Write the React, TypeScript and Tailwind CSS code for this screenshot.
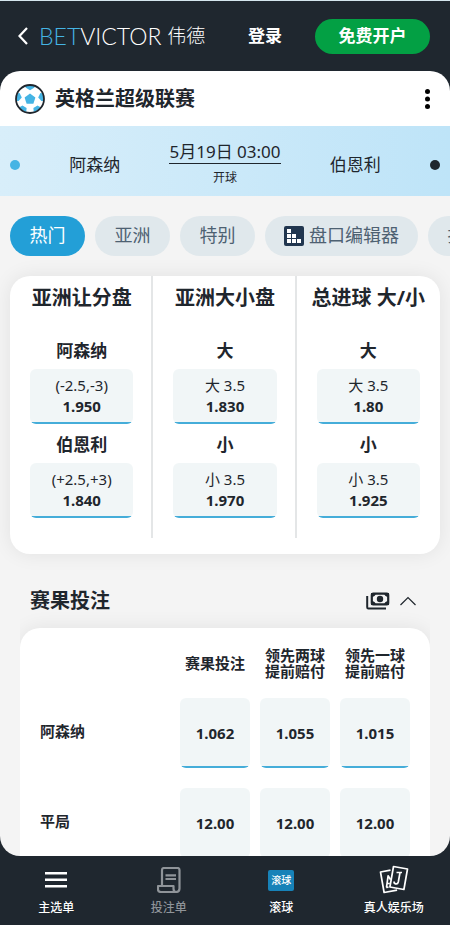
import React from "react";

type Selection = { team: string; line: string; price: string };
type Market = { title: string; selections: Selection[] };

const tabs = ["热门", "亚洲", "特别", "盘口编辑器", "投注"];

const markets: Market[] = [
  {
    title: "亚洲让分盘",
    selections: [
      { team: "阿森纳", line: "(-2.5,-3)", price: "1.950" },
      { team: "伯恩利", line: "(+2.5,+3)", price: "1.840" },
    ],
  },
  {
    title: "亚洲大小盘",
    selections: [
      { team: "大", line: "大 3.5", price: "1.830" },
      { team: "小", line: "小 3.5", price: "1.970" },
    ],
  },
  {
    title: "总进球 大/小",
    selections: [
      { team: "大", line: "大 3.5", price: "1.80" },
      { team: "小", line: "小 3.5", price: "1.925" },
    ],
  },
];

const resultColumns = ["赛果投注", "领先两球提前赔付", "领先一球提前赔付"];

const resultRows = [
  { name: "阿森纳", prices: ["1.062", "1.055", "1.015"] },
  { name: "平局", prices: ["12.00", "12.00", "12.00"] },
];

function BackIcon() {
  return (
    <svg width="10" height="18" viewBox="0 0 10 18" fill="none" stroke="#fff" strokeWidth="2.2">
      <path d="M9 1 1.5 9 9 17" />
    </svg>
  );
}

function FootballIcon() {
  return (
    <svg width="30" height="30" viewBox="0 0 30 30">
      <defs>
        <clipPath id="ball">
          <circle cx="15" cy="15" r="13.6" />
        </clipPath>
      </defs>
      <circle cx="15" cy="15" r="14" fill="#fff" />
      <g clipPath="url(#ball)" fill="#45b4e4">
        <path d="M15 9.6l5.4 3.9-2 6.3h-6.8l-2-6.3z" />
        <path d="M10.5 0h9v3.6L15 6.2l-4.500-2.600z" />
        <path d="M30 9.500l-4.600-.5-2.200 4.600 3.200 3.400H30z" />
        <path d="M0 9.500l4.600-.5 2.200 4.600L3.600 17H0z" />
        <path d="M24.500 28l1.600-4.500-3.600-1.900-4.100 2.300.4 4.600z" />
        <path d="M5.500 28l-1.600-4.500 3.600-1.900 4.100 2.300-.4 4.600z" />
      </g>
      <circle cx="15" cy="15" r="14" fill="none" stroke="#1f262d" strokeWidth="1.8" />
    </svg>
  );
}

function BuilderIcon() {
  return (
    <svg width="20" height="20" viewBox="0 0 20 20">
      <rect width="20" height="20" rx="2" fill="#21364f" />
      <path
        fill="#fff"
        d="M3 3h4v4H3zM3 8h4v4H3zM8 8h4v4H8zM3 13h4v4H3zM8 13h4v4H8zM13 13h4v4h-4z"
      />
    </svg>
  );
}

function CashIcon() {
  return (
    <svg width="24" height="18" viewBox="0 0 24 18" fill="none" stroke="#1f262d">
      <path d="M1.200 4v11.200q0 1.200 1.200 1.200H20" strokeWidth="2" />
      <rect x="5.800" y="1.700" width="16.400" height="10.600" rx="1.400" strokeWidth="2.200" />
      <path
        d="M5 1h5Q9.500 4.500 6 5H5zM23 1h-5q.5 3.500 4 4h1zM5 13h5Q9.500 9.500 6 9H5zM23 13h-5q.5-3.500 4-4h1z"
        fill="#1f262d"
        stroke="none"
      />
      <circle cx="14" cy="7" r="3.200" fill="#1f262d" stroke="none" />
    </svg>
  );
}

function MenuIcon() {
  return (
    <svg width="24" height="18" viewBox="0 0 24 18" fill="#fff">
      <path d="M1 1h22v2.600H1zM1 7.500h22v2.600H1zM1 14h22v2.600H1z" />
    </svg>
  );
}

function SlipIcon() {
  return (
    <svg width="24" height="26" viewBox="0 0 24 26" fill="none" stroke="#8f9499" strokeWidth="2.200" strokeLinejoin="round">
      <path d="M5 18.500V3q0-2 2-2h13.500Q22.500 1 22.500 3v18.500q0 3.500-3.500 3.500H4q-3 0-3-2.500v-3.500h15.500v2.500q0 3.500 2.500 3.500" />
      <path d="M8.500 8.300h10.500M8.500 12h10.500" />
    </svg>
  );
}

function CardsIcon() {
  return (
    <svg width="30" height="30" viewBox="0 0 30 30" fill="none" stroke="#fff" strokeWidth="1.700" strokeLinejoin="round">
      <path d="M11.500 5.200 1.500 7l3.600 20.500 13-2.300" />
      <path d="M14.500 1.500 28.500 4l-3.600 20.500-14-2.500z" />
      <path d="M17.500 7.500h5.500M21 7.700l-1.700 9.300q-.6 2.300-2.700 1.800-1.700-.4-1.500-2.300" />
      <path d="M7.500 22.300l1.600-11.500 2.500 4M7 22.500l2.500-.4M8.300 18.500h2.500" />
    </svg>
  );
}

function LiveIcon() {
  return (
    <span className="flex h-[21px] w-[26px] items-center justify-center rounded-xs bg-[#1782b8] text-[10px] font-medium">
      滚球
    </span>
  );
}

const navItems = [
  { label: "主选单", icon: <MenuIcon />, tone: "text-white" },
  { label: "投注单", icon: <SlipIcon />, tone: "text-[#8f9499]" },
  { label: "滚球", icon: <LiveIcon />, tone: "text-white" },
  { label: "真人娱乐场", icon: <CardsIcon />, tone: "text-white" },
];

export default function App() {
  return (
    <div className="flex h-screen flex-col border-t border-[#d5e6ee] bg-[#1f272f] font-['Noto_Sans','Noto_Sans_CJK_SC',sans-serif] text-[#1f262d]">
      <header className="flex h-[70px] shrink-0 items-center pr-5 pl-[18px] text-white">
        <button aria-label="返回" className="mr-[11px]">
          <BackIcon />
        </button>
        <a href="#home" className="flex items-center gap-[6px] whitespace-nowrap">
          <span className="font-['Lato',sans-serif] text-[23px] font-light">
            <span className="text-[#45b4e4]">BET</span>VICTOR
          </span>
          <span className="text-[19px] font-light">伟德</span>
        </a>
        <a href="#login" className="ml-auto text-[17px] font-bold">
          登录
        </a>
        <button className="ml-[33px] h-[35px] w-[115px] rounded-full bg-[#03a044] text-[17px] font-bold">
          免费开户
        </button>
      </header>

      <main className="min-h-0 flex-1 overflow-y-auto rounded-[20px] bg-[#f4f4f4] [scrollbar-width:none]">
        <div className="flex h-[55px] items-center bg-white pr-5 pl-[15px]">
          <FootballIcon />
          <h1 className="ml-[10px] text-[20px] font-bold">英格兰超级联赛</h1>
          <button aria-label="更多" className="ml-auto">
            <svg width="5" height="20" viewBox="0 0 5 20">
              <circle cx="2.500" cy="2.500" r="2.500" />
              <circle cx="2.500" cy="10" r="2.500" />
              <circle cx="2.500" cy="17.500" r="2.500" />
            </svg>
          </button>
        </div>

        <div className="flex h-[70px] items-center bg-linear-to-r from-[#d8eefa] to-[#bee4f8] px-[10px] pt-[7px]">
          <span className="size-[10px] rounded-full bg-[#45b4e4]" />
          <span className="flex-1 text-center text-[17px]">阿森纳</span>
          <div className="flex flex-col items-center">
            <span className="border-b border-[#1f262d] text-[17px] leading-[22px]">5月19日 03:00</span>
            <span className="mt-1 text-[12px] leading-5">开球</span>
          </div>
          <span className="flex-1 text-center text-[17px]">伯恩利</span>
          <span className="size-[10px] rounded-full bg-[#1f262d]" />
        </div>

        <nav className="flex gap-[10px] overflow-x-auto px-[10px] py-5 [scrollbar-width:none]">
          {tabs.map((tab, i) => (
            <button
              key={tab}
              className={`flex h-10 min-w-[75px] shrink-0 items-center justify-center gap-[5px] rounded-full px-[19px] pb-px text-[18px] ${
                i === 0 ? "bg-[#239fd7] text-white" : "bg-[#e0e8ec] text-[#4e6172]"
              }`}
            >
              {tab === "盘口编辑器" && <BuilderIcon />}
              {tab}
            </button>
          ))}
        </nav>

        <section className="mx-[10px] grid grid-cols-3 rounded-[20px] bg-white pb-4 shadow-[0_0_20px_rgba(0,0,0,0.08)]">
          {markets.map((market) => (
            <div key={market.title} className="border-r-2 border-[#e4e6e7] pb-5 text-center last:border-transparent">
              <h2 className="pt-[6px] pl-[2px] text-[20px] leading-8 font-bold whitespace-nowrap">{market.title}</h2>
              <div className="mt-4 pr-[18px] pl-5">
                {market.selections.map((s) => (
                  <div key={s.team}>
                    <h3 className="h-[39px] pt-[9px] text-[17px] leading-6 font-bold">{s.team}</h3>
                    <button className="flex h-[55px] w-full flex-col items-center justify-center rounded-md bg-[linear-gradient(to_top,#45add9_2px,#f1f6f7_2px)] pb-px text-[15px] leading-[21px]">
                      <span>{s.line}</span>
                      <span className="font-bold">{s.price}</span>
                    </button>
                  </div>
                ))}
              </div>
            </div>
          ))}
        </section>

        <section className="mx-5 overflow-hidden">
          <div className="flex h-[74px] items-center px-[10px] pt-5">
            <h2 className="text-[20px] font-bold">赛果投注</h2>
            <span className="ml-auto">
              <CashIcon />
            </span>
            <button aria-label="收起" className="mr-1 ml-[10px]">
              <svg width="16" height="10" viewBox="0 0 16 10" fill="none" stroke="#1f262d" strokeWidth="1.200">
                <path d="M.5 9 8 1.500 15.500 9" />
              </svg>
            </button>
          </div>
          <div className="rounded-[20px] bg-white px-5 shadow-[0_0_20px_rgba(0,0,0,0.08)]">
            <table className="w-full table-fixed text-[15px] font-bold">
              <thead>
                <tr className="h-[70px]">
                  <td />
                  {resultColumns.map((title) => (
                    <th key={title} scope="col" className="w-20 pl-[10px] leading-4">
                      {title}
                    </th>
                  ))}
                </tr>
              </thead>
              <tbody>
                {resultRows.map((row) => (
                  <tr key={row.name}>
                    <th scope="row" className="pb-6 text-left">
                      {row.name}
                    </th>
                    {row.prices.map((price, i) => (
                      <td key={i} className="pb-5 pl-[10px]">
                        <button className="block h-[70px] w-full rounded-md bg-[linear-gradient(to_top,#45add9_2px,#f1f6f7_2px)]">
                          {price}
                        </button>
                      </td>
                    ))}
                  </tr>
                ))}
              </tbody>
            </table>
          </div>
        </section>
      </main>

      <nav className="grid h-[69px] shrink-0 grid-cols-4">
        {navItems.map((item) => (
          <a key={item.label} href="#nav" className={`flex flex-col items-center pt-2 text-[12px] ${item.tone}`}>
            <span className="flex h-8 items-center">{item.icon}</span>
            <span className="leading-6 font-medium">{item.label}</span>
          </a>
        ))}
      </nav>
    </div>
  );
}
